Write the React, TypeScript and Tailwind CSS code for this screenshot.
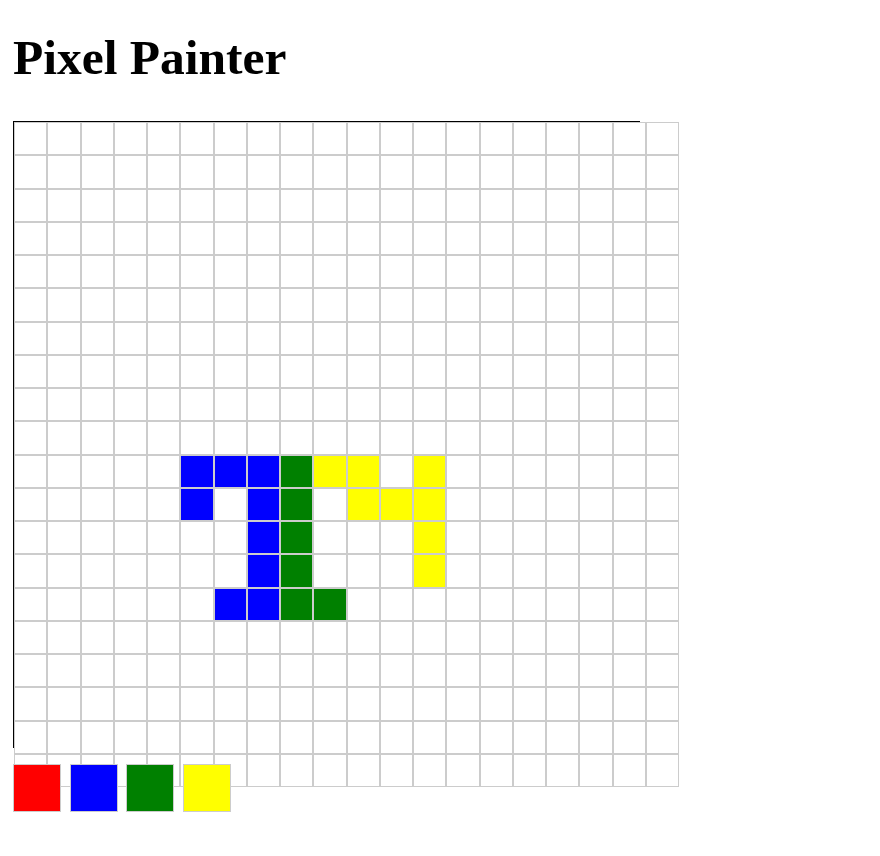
import React, { useState } from 'react';

const SIZE = 20;
const PALETTE = ['#ff0000', '#0000ff', '#008000', '#ffff00'];

const B = '#0000ff';
const G = '#008000';
const Y = '#ffff00';

// starting drawing, keyed "row-col"
const initialPixels: Record<string, string> = {
  '10-5': B, '10-6': B, '10-7': B, '10-8': G, '10-9': Y, '10-10': Y, '10-12': Y,
  '11-5': B, '11-7': B, '11-8': G, '11-10': Y, '11-11': Y, '11-12': Y,
  '12-7': B, '12-8': G, '12-12': Y,
  '13-7': B, '13-8': G, '13-12': Y,
  '14-6': B, '14-7': B, '14-8': G, '14-9': G,
};

const App: React.FC = () => {
  const [pixels, setPixels] = useState<Record<string, string>>(initialPixels);
  const [color, setColor] = useState(PALETTE[0]);

  const paint = (key: string) => {
    setPixels(prev => ({ ...prev, [key]: color }));
  };

  return (
    <div className="min-h-screen bg-white px-[13px] text-black font-['Liberation_Serif','Times_New_Roman',serif]">
      <h1 className="pt-[30px] mb-[36px] text-[49.5px] leading-[55px] font-bold">Pixel Painter</h1>

      {/* Canvas */}
      <div className="w-[627px] h-[627px] border border-black">
        <div className="grid grid-cols-[repeat(20,33.25px)] w-max">
          {Array.from({ length: SIZE * SIZE }).map((_, i) => {
            const key = `${Math.floor(i / SIZE)}-${i % SIZE}`;
            return (
              <div
                key={key}
                onClick={() => paint(key)}
                className="w-[33.25px] h-[33.25px] border border-[#ccc] bg-white cursor-pointer"
                style={pixels[key] ? { backgroundColor: pixels[key] } : undefined}
              />
            );
          })}
        </div>
      </div>

      {/* Palette */}
      <div className="flex gap-[8.7px] mt-[16px]">
        {PALETTE.map(c => (
          <button
            key={c}
            onClick={() => setColor(c)}
            className="w-12 h-12 border border-[#ccc] cursor-pointer"
            style={{ backgroundColor: c }}
            title={c}
          />
        ))}
      </div>
    </div>
  );
};

export default App;
